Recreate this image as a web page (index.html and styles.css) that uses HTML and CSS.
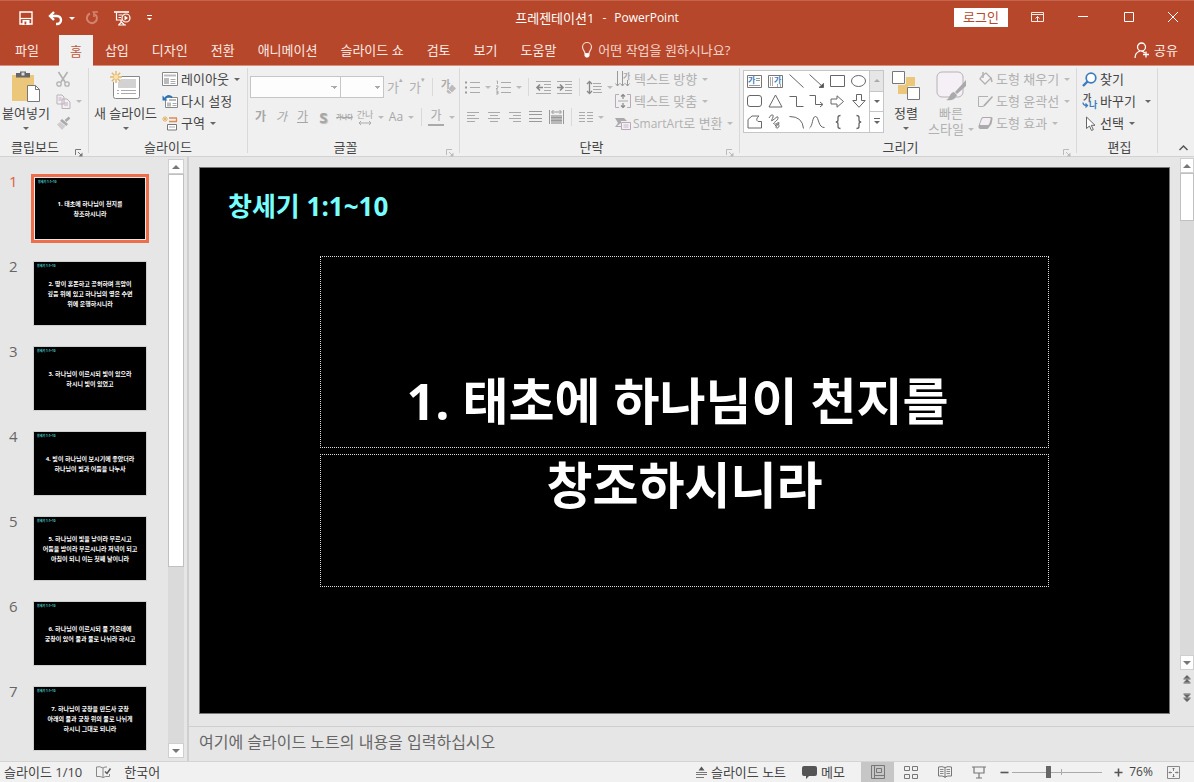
FILE: index.html
```html
<!DOCTYPE html>
<html lang="ko">
<head>
<meta charset="utf-8">
<title>프레젠테이션1 - PowerPoint</title>
<link rel="stylesheet" href="styles.css">
</head>
<body>
<div class="app">
<header class="titlebar">
  <div class="quick">
    <button class="qb" aria-label="저장"><svg width="14" height="14" viewBox="0 0 14 14"><path d="M1 1h12v12H1z" fill="none" stroke="#fff" stroke-width="1.4"/><path d="M1 7.5h12" stroke="#fff" stroke-width="1.2"/><path d="M3.5 9h7v5h-7z" fill="#fff"/><path d="M5.5 10.500h1.800v3h-1.800z" fill="#b7472a"/></svg></button>
    <button class="qb undo" aria-label="실행 취소"><svg width="15" height="14" viewBox="0 0 15 14"><path d="M2 5h7a4 4 0 0 1 0 8H8" fill="none" stroke="#fff" stroke-width="2.400"/><path d="M6 1 2 5l4 4" fill="none" stroke="#fff" stroke-width="2.400"/></svg><i class="caret"></i></button>
    <button class="qb" aria-label="다시 실행" disabled><svg width="14" height="14" viewBox="0 0 14 14"><path d="M5 2.500a5 5 0 1 0 5 .7" fill="none" stroke="#d18570" stroke-width="2"/><path d="M7.500 1H13M9 1v5" fill="none" stroke="#d18570" stroke-width="1.600"/></svg></button>
    <button class="qb" aria-label="처음부터 슬라이드 쇼"><svg width="17" height="15" viewBox="0 0 17 15"><path d="M0 1h15" stroke="#fff" stroke-width="1.600"/><path d="M2.500 1.500V9H8M4.500 4h4M4.500 6.500h2.500M7 9v3M4 14h8M5 13.500 7.500 11l3 3" fill="none" stroke="#fff" stroke-width="1.200"/><circle cx="12" cy="7" r="4" fill="none" stroke="#fff" stroke-width="1.200"/><path d="M10.500 4.500 14 7l-3.500 2.500z" fill="#fff"/></svg></button>
    <button class="qb more" aria-label="빠른 실행 도구 모음 사용자 지정"><svg width="6" height="6" viewBox="0 0 6 6"><path d="M0 .5h5" stroke="#fff"/><path d="M0 3h5L2.500 5.500z" fill="#fff"/></svg></button>
  </div>
  <div class="doc-title"><span>프레젠테이션1</span><span class="latin">-</span><span class="latin">PowerPoint</span></div>
  <div class="window">
    <button class="login">로그인</button>
    <button class="wb" aria-label="리본 메뉴 표시 옵션"><svg width="13" height="10" viewBox="0 0 13 10"><path d="M.5.5h12v9H.5zM.5 2.500h12M6.500 9V4.500M4.500 6.500l2-2 2 2" fill="none" stroke="#fbe9e4"/></svg></button>
    <button class="wb" aria-label="최소화"><svg width="10" height="10" viewBox="0 0 10 10"><path d="M0 4.500h10" stroke="#fff"/></svg></button>
    <button class="wb" aria-label="최대화"><svg width="10" height="10" viewBox="0 0 10 10"><path d="M.5.5h9v9h-9z" fill="none" stroke="#fff"/></svg></button>
    <button class="wb close" aria-label="닫기"><svg width="10" height="10" viewBox="0 0 10 10"><path d="M0 0l10 10M10 0 0 10" stroke="#fff"/></svg></button>
  </div>
</header>
<nav class="tabs">
  <button class="tab file">파일</button><button class="tab on">홈</button><button class="tab">삽입</button><button class="tab">디자인</button><button class="tab">전환</button><button class="tab">애니메이션</button><button class="tab">슬라이드 쇼</button><button class="tab">검토</button><button class="tab">보기</button><button class="tab">도움말</button>
  <button class="tell"><svg width="12" height="16" viewBox="0 0 12 16"><path d="M4 11.500C4 9 1.500 8 1.500 5a4.500 4.500 0 0 1 9 0c0 3-2.500 4-2.500 6.500z" fill="none" stroke="#f6d9d1" stroke-width="1.200"/><path d="M3.500 11.500h5V14L7 15.500H5L3.500 14z" fill="#fff"/></svg>어떤 작업을 원하시나요?</button>
  <button class="share"><svg width="16" height="17" viewBox="0 0 16 17"><circle cx="7.500" cy="5" r="4" fill="none" stroke="#fff" stroke-width="1.300"/><path d="M1 16c0-3.500 2-6 5-7M8 9l3 2M12 9.500v6M9 12.500h6" fill="none" stroke="#fff" stroke-width="1.300"/></svg>공유</button>
</nav>
<section class="ribbon">
  <div class="group g-clip">
    <div class="body">
      <button class="big"><svg width="30" height="34" viewBox="0 0 30 34"><path d="M1 4h22v26H1z" fill="#edc779"/><path d="M5 2h4V.5h6V2h4v4.500H5z" fill="#666"/><path d="M10.500 1.500h3v3h-3z" fill="#ddd"/><path d="M16.500 14.500h8l4 4v12h-12z" fill="#fff" stroke="#777"/><path d="M24.500 14.500v4h4" fill="none" stroke="#777"/></svg><span>붙여넣기</span><i class="caret"></i></button>
      <div class="col">
        <button class="row" disabled aria-label="잘라내기"><svg width="14" height="15" viewBox="0 0 14 15"><path d="M2.500 0 9 10M11.500 0 5 10" stroke="#b1b1b1" stroke-width="1.600"/><circle cx="3" cy="12" r="2.200" fill="none" stroke="#b1b1b1" stroke-width="1.300"/><circle cx="11" cy="12" r="2.200" fill="none" stroke="#b1b1b1" stroke-width="1.300"/></svg></button>
        <button class="row" disabled aria-label="복사"><svg width="15" height="15" viewBox="0 0 15 15"><path d="M1 1h5l2 2v7H1zM6 5h5l3 3v6.500H6z" fill="#f3eef3" stroke="#b9b1b9"/><path d="M2.500 4h3M2.500 6h3M8 9h4M8 11h4" stroke="#b9b1b9"/></svg><i class="caret"></i></button>
        <button class="row" disabled aria-label="서식 복사"><svg width="15" height="13" viewBox="0 0 15 13"><path d="M13.500.5 9.500 4" stroke="#aaa" stroke-width="2.500"/><path d="M6 2l6 5-1.500 2L4 4z" fill="#aaa"/><path d="M4 5l5.500 4L6 13 1 7.500z" fill="#d0ccd0"/></svg></button>
      </div>
    </div>
    <div class="label launch"><span>클립보드</span><button class="launcher" aria-label="클립보드 옵션"><svg width="8" height="8" viewBox="0 0 8 8"><path d="M.5 6V.5H6M3 3l3.500 3.500" fill="none" stroke="#777"/><path d="M7.500 3.500v4h-4z" fill="#777"/></svg></button></div>
  </div>
  <div class="group g-slides">
    <div class="body">
      <button class="big new"><svg width="32" height="34" viewBox="0 0 32 34"><path d="M3.500 5.500h26v20q0 2-2 2h-22q-2 0-2-2z" fill="#fff" stroke="#888"/><path d="M8 8h18v9H8z" fill="#d2d2d2"/><path d="M7 19.500h2M11 19.500h15M7 22.500h2M11 22.500h15" stroke="#aaa"/><circle cx="6" cy="6" r="5.500" fill="#f0f0f0"/><path d="M6 0v12M0 6h12M1.800 1.800l8.400 8.400M10.200 1.800l-8.400 8.400" stroke="#e3b667" stroke-width="1.400"/><circle cx="6" cy="6" r="2.200" fill="#f8e0a8"/></svg><span>새 슬라이드</span><i class="caret"></i></button>
      <div class="col">
        <button class="row"><svg width="16" height="14" viewBox="0 0 16 14"><path d="M.5.5h15v13H.5z" fill="#fff" stroke="#888"/><path d="M2 2.500h12v2H2zM2 6h5v6H2z" fill="#bbb"/><path d="M8.500 7.500h5M8.500 9.500h5M8.500 11.500h5" stroke="#aaa"/></svg>레이아웃<i class="caret"></i></button>
        <button class="row"><svg width="16" height="14" viewBox="0 0 16 14"><path d="M3.500 3.500h12v10h-12z" fill="#fff" stroke="#888"/><path d="M7 5h7v2H7zM5 8.500h4v4H5z" fill="#bbb"/><path d="M10.500 9.500h4M10.500 11.500h4" stroke="#aaa"/><path d="M3 5.500C4 2 7 1 10 3.500" fill="none" stroke="#2e75b6" stroke-width="2"/><path d="M.5 1.500v5h5z" fill="#2e75b6"/></svg>다시 설정</button>
        <button class="row"><svg width="16" height="15" viewBox="0 0 16 15"><path d="M7 2h8M14.500 2v4M7 5.500h8" fill="none" stroke="#dc8a55" stroke-width="1.300"/><path d="M5.500 8.500h9v5.500h-9z" fill="#fff" stroke="#777"/><path d="M7 11h6" stroke="#aaa"/><path d="M3 0v6M0 3h6M1 1l4 4M5 1 1 5" stroke="#e3b667"/></svg>구역<i class="caret"></i></button>
      </div>
    </div>
    <div class="label"><span>슬라이드</span></div>
  </div>
  <div class="group g-font off">
    <div class="body rows">
      <div class="line"><select class="combo name" aria-label="글꼴" disabled><option></option></select><select class="combo size" aria-label="글꼴 크기" disabled><option></option></select>
        <button class="tb grow">가<sup>▴</sup></button><button class="tb grow">가<sup>▾</sup></button><i class="sep"></i><button class="tb erase" aria-label="서식 지우기"><svg width="15" height="16" viewBox="0 0 15 16"><text x="0" y="9" class="svg-ko" font-size="10">가</text><path d="M11 5.500l4 4-5 5H7L5.500 12z" fill="#bdb9bd"/><path d="M7 10l4 4" stroke="#f0f0f0"/></svg></button></div>
      <div class="line chars"><button class="tb"><b>가</b></button><button class="tb"><em>가</em></button><button class="tb"><u>가</u></button><button class="tb shadow">S</button><button class="tb strike"><s>가나다</s></button><button class="tb drop"><span class="spacing">간나<svg width="14" height="4" viewBox="0 0 14 4"><path d="M1 2h12M3 0 1 2l2 2M11 0l2 2-2 2" fill="none" stroke="#aaa"/></svg></span><i class="caret"></i></button><button class="tb drop">Aa<i class="caret"></i></button><i class="sep"></i><button class="tb drop"><span class="colour">가</span><i class="caret"></i></button></div>
    </div>
    <div class="label launch"><span>글꼴</span><button class="launcher" aria-label="글꼴 옵션"><svg width="8" height="8" viewBox="0 0 8 8"><path d="M.5 6V.5H6M3 3l3.500 3.500" fill="none" stroke="#bbb"/><path d="M7.500 3.500v4h-4z" fill="#bbb"/></svg></button></div>
  </div>
  <div class="group g-para off">
    <div class="body">
      <div class="rows">
        <div class="line"><button class="tb drop" aria-label="글머리 기호"><svg width="15" height="14" viewBox="0 0 15 14"><path d="M5 2.500h10M5 7.500h10M5 12.500h10" stroke="#aaa"/><path d="M0 1.500h2v2H0zM0 6.500h2v2H0zM0 11.500h2v2H0z" fill="#999"/></svg><i class="caret"></i></button><button class="tb drop" aria-label="번호 매기기"><svg width="15" height="15" viewBox="0 0 15 15"><path d="M5 2.500h10M5 7.500h10M5 12.500h10" stroke="#aaa"/><path d="M.5 1h1v3M0 6h2v1.500L0 9h2M0 11h2v3H0M.5 12.500H2" fill="none" stroke="#999" stroke-width=".8"/></svg><i class="caret"></i></button><i class="sep"></i><button class="tb" aria-label="내어쓰기"><svg width="15" height="14" viewBox="0 0 15 14"><path d="M0 1.500h15M8 4.500h7M8 7.500h7M8 10.500h7M0 13.500h15" stroke="#aaa"/><path d="M7 7.500H1.500M4 4.500 1 7.500l3 3" fill="none" stroke="#888" stroke-width="1.600"/></svg></button><button class="tb" aria-label="들여쓰기"><svg width="15" height="14" viewBox="0 0 15 14"><path d="M0 1.500h15M8 4.500h7M8 7.500h7M8 10.500h7M0 13.500h15" stroke="#aaa"/><path d="M0 7.500h5.500M3 4.500l3 3-3 3" fill="none" stroke="#888" stroke-width="1.600"/></svg></button><i class="sep"></i><button class="tb drop" aria-label="줄 간격"><svg width="15" height="15" viewBox="0 0 15 15"><path d="M6 3.500h8M6 6.500h9M6 9.500h8M6 12.500h9" stroke="#aaa"/><path d="M2.500 1.500v12M0 4l2.500-2.500L5 4M0 11l2.500 2.500L5 11" fill="none" stroke="#888" stroke-width="1.300"/></svg><i class="caret"></i></button></div>
        <div class="line"><button class="tb" aria-label="왼쪽 맞춤"><svg width="12" height="12" viewBox="0 0 12 12"><path d="M0 1.500h12M0 4.500h8M0 7.500h12M0 10.500h8" stroke="#aaa"/></svg></button><button class="tb" aria-label="가운데 맞춤"><svg width="12" height="12" viewBox="0 0 12 12"><path d="M0 1.500h12M2 4.500h8M0 7.500h12M2 10.500h8" stroke="#aaa"/></svg></button><button class="tb" aria-label="오른쪽 맞춤"><svg width="12" height="12" viewBox="0 0 12 12"><path d="M0 1.500h12M4 4.500h8M0 7.500h12M4 10.500h8" stroke="#aaa"/></svg></button><button class="tb" aria-label="양쪽 맞춤"><svg width="13" height="12" viewBox="0 0 13 12"><path d="M0 .5h13M0 3.500h13M0 7.500h13M0 10.500h13" stroke="#999"/></svg></button><button class="tb" aria-label="균등 분할"><svg width="15" height="16" viewBox="0 0 15 16"><path d="M.5 1v14M14.500 1v14M3 3h9M4.500 1 2.500 3l2 2M10.500 1l2 2-2 2" fill="none" stroke="#999"/><path d="M2 6h11v9H2z" fill="#b8b8b8"/><path d="M2 8.500h11M2 11.500h11" stroke="#999"/></svg></button><i class="sep"></i><button class="tb drop" aria-label="단"><svg width="14" height="12" viewBox="0 0 14 12"><path d="M0 1.500h6M8 1.500h6M0 4.500h6M8 4.500h6M0 7.500h6M8 7.500h6M0 10.500h6M8 10.500h6" stroke="#aaa"/></svg><i class="caret"></i></button></div>
      </div>
      <div class="col">
        <button class="row"><svg width="16" height="17" viewBox="0 0 16 17"><path d="M2.500 0v15M7.500 0v15M12.500 9v6M.5 12.500l2 2.500 2-2.500M5.500 12.500l2 2.500 2-2.500M10.500 12.500l2 2.500 2-2.500" fill="none" stroke="#999"/><text x="8" y="8" class="svg-ko" font-size="8">가</text></svg>텍스트 방향<i class="caret"></i></button>
        <button class="row"><svg width="16" height="15" viewBox="0 0 16 15"><path d="M4 .5H.5v13H4M12 .5h3.500v13H12" fill="none" stroke="#b9a9b9"/><path d="M3 7h10" stroke="#aaa"/><path d="M8 0v5M6 2.500 8 .5l2 2M8 9v5M6 11.500l2 2 2-2" fill="none" stroke="#888" stroke-width="1.200"/></svg>텍스트 맞춤<i class="caret"></i></button>
        <button class="row smart"><svg width="16" height="13" viewBox="0 0 16 13"><path d="M0 1h9l3 3H6v2L2 9h4v1H0l3-4z" fill="#aaa"/><path d="M6.500 5.500h9v7h-9z" fill="#f6f0f6" stroke="#b9a9b9"/><path d="M8.500 8h5M8.500 10h5" stroke="#c4bac4"/></svg><span><span class="latin">SmartArt</span>로 변환</span><i class="caret"></i></button>
      </div>
    </div>
    <div class="label launch"><span>단락</span><button class="launcher" aria-label="단락 옵션"><svg width="8" height="8" viewBox="0 0 8 8"><path d="M.5 6V.5H6M3 3l3.500 3.500" fill="none" stroke="#bbb"/><path d="M7.500 3.500v4h-4z" fill="#bbb"/></svg></button></div>
  </div>
  <div class="group g-draw">
    <div class="body">
      <div class="gallery">
        <div class="shapes">
          <button aria-label="텍스트 상자"><svg width="15" height="13" viewBox="0 0 15 13"><path d="M.5.5h14v12H.5z" fill="#fff" stroke="#777"/><text x="1" y="8" font-size="8" class="svg-ko blue">가</text><path d="M9 3.500h4M9 5.500h4M2 10.500h11" stroke="#999"/></svg></button>
          <button aria-label="세로 텍스트 상자"><svg width="15" height="13" viewBox="0 0 15 13"><path d="M.5.5h14v12H.5z" fill="#fff" stroke="#777"/><text x="6" y="8" font-size="8" class="svg-ko blue">가</text><path d="M2.500 2v9M4.500 2v9M9.500 9v3M12.500 9v3" stroke="#aaa"/></svg></button>
          <button aria-label="선"><svg width="15" height="14" viewBox="0 0 15 14"><path d="M.5.5l14 13"/></svg></button>
          <button aria-label="화살표"><svg width="15" height="14" viewBox="0 0 15 14"><path d="M.5.5l13 12"/><path d="M14.500 9.500v4H10z" fill="#555"/></svg></button>
          <button aria-label="직사각형"><svg width="15" height="12" viewBox="0 0 15 12"><path d="M.5.5h14v11H.5z"/></svg></button>
          <button aria-label="타원"><svg width="15" height="12" viewBox="0 0 15 12"><ellipse cx="7.500" cy="6" rx="7" ry="5.500"/></svg></button>
          <button aria-label="둥근 직사각형"><svg width="15" height="12" viewBox="0 0 15 12"><rect x=".5" y=".5" width="14" height="11" rx="2.500"/></svg></button>
          <button aria-label="삼각형"><svg width="15" height="14" viewBox="0 0 15 14"><path d="M7.500 1 14 13H1z"/></svg></button>
          <button aria-label="꺾인 연결선"><svg width="15" height="13" viewBox="0 0 15 13"><path d="M.5 1.500h7v10h7"/></svg></button>
          <button aria-label="꺾인 화살표"><svg width="15" height="14" viewBox="0 0 15 14"><path d="M.5 1.500h6v9h7M11 8l3 2.500-3 2.500"/></svg></button>
          <button aria-label="오른쪽 화살표"><svg width="15" height="13" viewBox="0 0 15 13"><path d="M1 4h6V.8l6.500 5.700L7 12.200V9H1z"/></svg></button>
          <button aria-label="아래쪽 화살표"><svg width="14" height="14" viewBox="0 0 14 14"><path d="M4.500.5h5v6h3.700L7 13.300.8 6.500h3.700z"/></svg></button>
          <button aria-label="자유형 도형"><svg width="15" height="14" viewBox="0 0 15 14"><path d="M1 13V4.500L5 1h7q-4 3.500-1 5.500h3.500V13z"/></svg></button>
          <button aria-label="자유형 선"><svg width="14" height="15" viewBox="0 0 14 15"><path d="M1 4c2-4 5-4 4-1S2 8 5 6s5-5 5-2-6 5-4 6 5-3 5-1-3 2-3 4 3 1 3-1-1-3-4 0"/></svg></button>
          <button aria-label="호"><svg width="15" height="14" viewBox="0 0 15 14"><path d="M.5 1.500q13 0 14 12"/></svg></button>
          <button aria-label="곡선"><svg width="16" height="14" viewBox="0 0 16 14"><path d="M.5 13C4 11 3 1.500 6.500 1.500S9 13 15.500 12.500"/></svg></button>
          <button aria-label="왼쪽 중괄호"><svg width="6" height="14" viewBox="0 0 6 14"><path d="M5.500.5Q3 .5 3 2.500V5Q3 7 .8 7 3 7 3 9v2.500q0 2 2.500 2" stroke-width="1.300"/></svg></button>
          <button aria-label="오른쪽 중괄호"><svg width="6" height="14" viewBox="0 0 6 14"><path d="M.5.500Q3 .5 3 2.500V5q0 2 2.200 2Q3 7 3 9v2.500q0 2-2.500 2" stroke-width="1.300"/></svg></button>
        </div>
        <div class="scroll3"><button disabled aria-label="위로"><i class="caret up"></i></button><button aria-label="아래로"><i class="caret"></i></button><button aria-label="자세히"><i class="caret bar-top"></i></button></div>
      </div>
      <button class="big arrange"><svg width="28" height="34" viewBox="0 0 28 34"><path d="M14 6h9v9h-9zM6 14h9v9H6z" fill="#edc779"/><path d="M13 13h3v3h-3z" fill="#edc779"/><path d="M.5.500h12v12H.5zM15.500 16.500h12v12h-12z" fill="#fff" stroke="#777"/></svg><span>정렬</span><i class="caret"></i></button>
      <button class="big style" disabled><svg width="31" height="34" viewBox="0 0 31 34"><rect x="1" y="1" width="26" height="25" rx="5" fill="#f5f0f6" stroke="#b8b0b8"/><path d="M30 9v6l-9 8-2-2z" fill="#aaa"/><path d="M18 21l3 3c-2 5-7 6-11 5 4-1 3-7 8-8z" fill="#aaa"/></svg><span>빠른</span><span class="last">스타일<i class="caret"></i></span></button>
      <div class="col off">
        <button class="row" disabled><svg width="15" height="14" viewBox="0 0 15 14"><path d="M4 4l4-3 5 5-6 6-5-5z" fill="#f6f2f6" stroke="#b1b1b1" stroke-width="1.300"/><path d="M5 0v6M13 6l1 4" stroke="#b1b1b1" stroke-width="1.500"/></svg>도형 채우기<i class="caret"></i></button>
        <button class="row" disabled><svg width="15" height="13" viewBox="0 0 15 13"><path d="M10 1.500H.5v10H5" fill="none" stroke="#b1b1b1"/><path d="M14 1 6 9.500l-1.500 2.500L7 11l8-9z" fill="#aaa"/></svg>도형 윤곽선<i class="caret"></i></button>
        <button class="row" disabled><svg width="15" height="14" viewBox="0 0 15 14"><path d="M5 1h8q2 0 1.500 2l-1 5-3 4q-.5 1-1.500 1H2.500Q0 12.500.5 10L3 3q.5-2 2-2z" fill="#aaa"/><path d="M5.500 2H12q1 0 .7 1l-1.500 5q-.4 1-1.400 1H3q-1.300 0-1-1l2-5q.5-1 1.500-1z" fill="#f4eef4"/></svg>도형 효과<i class="caret"></i></button>
      </div>
    </div>
    <div class="label launch"><span>그리기</span><button class="launcher" aria-label="그리기 옵션"><svg width="8" height="8" viewBox="0 0 8 8"><path d="M.5 6V.5H6M3 3l3.500 3.500" fill="none" stroke="#bbb"/><path d="M7.500 3.500v4h-4z" fill="#bbb"/></svg></button></div>
  </div>
  <div class="group g-edit">
    <div class="body">
      <div class="col">
        <button class="row"><svg width="15" height="15" viewBox="0 0 15 15"><circle cx="9" cy="6" r="4.800" fill="#fff" stroke="#3a7cbf" stroke-width="1.700"/><path d="M5.500 9.500 1 14" stroke="#3a7cbf" stroke-width="2.400"/></svg>찾기</button>
        <button class="row"><svg width="15" height="16" viewBox="0 0 15 16"><text x="1" y="8" font-size="9" class="svg-ko dark">가</text><text x="7" y="15" font-size="9" class="svg-ko blue">나</text><path d="M1 9.500q0 3 4 3M3.500 10.500l2 2-2 2" fill="none" stroke="#3a7cbf" stroke-width="1.300"/></svg>바꾸기<i class="caret wide"></i></button>
        <button class="row"><svg width="15" height="15" viewBox="0 0 15 15"><path d="M4.500 1v11.500l3-2.500 2 4.500 1.800-.8-2-4.400H13z" fill="#fff" stroke="#666"/></svg>선택<i class="caret"></i></button>
      </div>
    </div>
    <div class="label"><span>편집</span></div>
  </div>
  <button class="collapse" aria-label="리본 메뉴 축소"><svg width="9" height="6" viewBox="0 0 9 6"><path d="M.5 5l4-4 4 4" fill="none" stroke="#555" stroke-width="1.500"/></svg></button>
</section>
<main class="work">
  <ol class="thumbs">
    <li class="on"><span>1</span><div class="thumb"><h6>창세기 1:1~10</h6><p>1. 태초에 하나님이 천지를<br>창조하시니라</p></div></li>
    <li><span>2</span><div class="thumb"><h6>창세기 1:1~10</h6><p>2. 땅이 혼돈하고 공허하며 흑암이<br>깊음 위에 있고 하나님의 영은 수면<br>위에 운행하시니라</p></div></li>
    <li><span>3</span><div class="thumb"><h6>창세기 1:1~10</h6><p>3. 하나님이 이르시되 빛이 있으라<br>하시니 빛이 있었고</p></div></li>
    <li><span>4</span><div class="thumb"><h6>창세기 1:1~10</h6><p>4. 빛이 하나님이 보시기에 좋았더라<br>하나님이 빛과 어둠을 나누사</p></div></li>
    <li><span>5</span><div class="thumb"><h6>창세기 1:1~10</h6><p>5. 하나님이 빛을 낮이라 부르시고<br>어둠을 밤이라 부르시니라 저녁이 되고<br>아침이 되니 이는 첫째 날이니라</p></div></li>
    <li><span>6</span><div class="thumb"><h6>창세기 1:1~10</h6><p>6. 하나님이 이르시되 물 가운데에<br>궁창이 있어 물과 물로 나뉘라 하시고</p></div></li>
    <li><span>7</span><div class="thumb"><h6>창세기 1:1~10</h6><p>7. 하나님이 궁창을 만드사 궁창<br>아래의 물과 궁창 위의 물로 나뉘게<br>하시니 그대로 되니라</p></div></li>
  </ol>
  <div class="bar left"><button aria-label="위로"><i class="caret up"></i></button><div class="track"><div class="grip long"></div></div><button aria-label="아래로"><i class="caret"></i></button></div>
  <section class="editor">
    <div class="canvas">
      <article class="slide">
        <h1>창세기 1:1~10</h1>
        <div class="ph first">1. 태초에 하나님이 천지를</div>
        <div class="ph second">창조하시니라</div>
      </article>
      <div class="bar right"><button aria-label="위로"><i class="caret up"></i></button><div class="track"><div class="grip"></div></div><button aria-label="아래로"><i class="caret"></i></button>
        <button class="page" aria-label="이전 슬라이드"><svg width="8" height="9" viewBox="0 0 8 9"><path d="M4 0l3.500 3.500h-7zM4 4l3.500 3.500h-7z" fill="#666"/><path d="M.5 4h7M.5 8h7" stroke="#666"/></svg></button><button class="page" aria-label="다음 슬라이드"><svg width="8" height="9" viewBox="0 0 8 9"><path d="M.5 1.500h7L4 5zM.5 5.500h7L4 9z" fill="#666"/><path d="M.5 1h7M.5 5h7" stroke="#666"/></svg></button></div>
    </div>
    <div class="notes">여기에 슬라이드 노트의 내용을 입력하십시오</div>
  </section>
</main>
<footer class="status">
  <span>슬라이드 1/10</span>
  <button class="spell" aria-label="맞춤법 검사"><svg width="15" height="12" viewBox="0 0 15 12"><path d="M7 2Q4 0 .5 1v9.500q4-.5 6.500 1 2-1.500 6.500-1V8M7 2v9.500M7 2q2-1.500 4-1" fill="none" stroke="#888"/><path d="M9 5.500l2 2 3.500-5" fill="none" stroke="#555" stroke-width="1.400"/></svg></button>
  <button>한국어</button>
  <div class="views">
    <button class="st"><svg width="11" height="12" viewBox="0 0 11 12"><path d="M2.500 4.500h6L5.500.5z" fill="#555"/><path d="M0 6.500h11M0 8.500h11M0 11.500h8" stroke="#777"/></svg>슬라이드 노트</button>
    <button class="st"><svg width="15" height="13" viewBox="0 0 15 13"><path d="M2 0h11q2 0 2 2v6q0 2-2 2H7l-3 3v-3H2q-2 0-2-2V2q0-2 2-2z" fill="#555"/></svg>메모</button>
    <button class="view on" aria-label="기본"><svg width="14" height="14" viewBox="0 0 14 14"><path d="M.5.500h13v13H.5zM3.500.5v13M3.500 10.500h10M5.500 3.500h5v4h-5z" fill="none" stroke="#777"/></svg></button>
    <button class="view" aria-label="여러 슬라이드"><svg width="14" height="13" viewBox="0 0 14 13"><path d="M.5.5h5v4h-5zM8.500.5h5v4h-5zM.5 8.500h5v4h-5zM8.500 8.500h5v4h-5z" fill="none" stroke="#777"/></svg></button>
    <button class="view" aria-label="읽기용 보기"><svg width="14" height="12" viewBox="0 0 14 12"><path d="M7 1.500Q4 0 .5 1v9q4-.5 6.500 1 2.500-1.500 6.500-1V1Q10 0 7 1.500zM7 1.500V12" fill="none" stroke="#777"/><path d="M2 3.500h3.500M2 5.500h3.500M2 7.500h3.500M8.500 3.500H12M8.500 5.500H12M8.500 7.500H12" stroke="#888"/></svg></button>
    <button class="view" aria-label="슬라이드 쇼"><svg width="14" height="13" viewBox="0 0 14 13"><path d="M0 1h14M2 1v6h10V1M7 7v5M4 12h6" fill="none" stroke="#777" stroke-width="1.200"/></svg></button>
    <button class="z" aria-label="축소"><svg width="9" height="9" viewBox="0 0 9 9"><path d="M.5 4.500h8" stroke="#555" stroke-width="1.600"/></svg></button>
    <input class="zoom" type="range" min="0" max="100" value="40" aria-label="확대/축소">
    <button class="z" aria-label="확대"><svg width="9" height="9" viewBox="0 0 9 9"><path d="M.5 4.500h8M4.500.5v8" stroke="#555" stroke-width="1.600"/></svg></button>
    <button class="pct latin">76%</button>
    <button class="fit" aria-label="창에 맞춤"><svg width="13" height="13" viewBox="0 0 13 13"><path d="M.5.5h12v12H.5z" fill="none" stroke="#888"/><path d="M6.500 2v3M6.500 8v3M2 6.500h3M8 6.500h3M5.500 3l1-1 1 1M5.500 10l1 1 1-1M3 5.500l-1 1 1 1M10 5.500l1 1-1 1" fill="none" stroke="#666" stroke-width=".8"/></svg></button>
  </div>
</footer>
</div>
</body>
</html>
```
FILE: styles.css
```css
* { box-sizing: border-box; }
body { margin: 0; font: 13px/16px "Open Sans", "Noto Sans CJK KR", sans-serif; color: #444; }
button { font: inherit; color: inherit; background: none; border: 0; padding: 0; margin: 0; display: flex; align-items: center; justify-content: center; white-space: nowrap; }
svg { display: block; flex: none; overflow: visible; }
.app { display: flex; flex-direction: column; min-height: 100vh; background: #e6e6e6; }
.latin { font-size: 12px; }
.caret { flex: none; width: 0; height: 0; border: 3px solid transparent; border-top-color: #666; border-bottom: 0; }
.caret.up { border-top: 0; border-bottom: 3px solid #aaa; }

/* Title bar */
.titlebar { display: grid; grid-template-columns: 1fr auto 1fr; align-items: center; height: 35px; background: #b7472a; border-top: 1px solid #c7654c; color: #fff; }
.quick { display: flex; align-items: center; padding-left: 19px; gap: 15px; }
.qb.undo { gap: 6px; margin-right: -5px; }
.qb .caret { border-top-color: #fff; }
.qb.more { margin-left: 1px; }
.doc-title { display: flex; gap: 8px; }
.window { display: flex; justify-content: flex-end; align-items: center; padding-bottom: 2px; }
.login { background: #fff; color: #b7472a; width: 54px; height: 19px; margin-right: 6px; }
.wb { width: 46px; height: 24px; }
.wb.close { width: 42px; }

/* Tabs */
.tabs { display: flex; gap: 1px; height: 31px; background: #b7472a; color: #fbeae5; border-bottom: 1px solid #d68f7d; }
.tab { padding: 0 11px; }
.tab.file { padding: 0 19px 0 15px; }
.tab.on { background: #f0f0f0; color: #c0583c; height: 31px; }
.tell { margin-left: 13px; gap: 5px; color: #f3d4cb; }
.share { margin-left: auto; padding-right: 16px; gap: 4px; }

/* Ribbon */
.ribbon { display: flex; height: 91px; background: #f0f0f0; border-bottom: 1px solid #d2d2d2; }
.group { display: flex; flex-direction: column; margin: 2px 0 3px; border-right: 1px solid #d9d9d9; flex: none; }
.body { display: flex; height: 69px; }
.label { display: grid; grid-template-columns: 1fr; height: 16px; line-height: 20px; text-align: center; color: #444; }
.label.launch { grid-template-columns: 1fr 18px; }
.launcher { align-items: flex-end; }
.g-clip { width: 89px; }
.g-slides { width: 159px; }
.g-font { width: 212px; padding-left: 2px; }
.g-para { width: 280px; padding-left: 2px; }
.g-draw { width: 337px; padding-left: 3px; }
.g-edit { width: 81px; padding-left: 5px; }
.off, :disabled { color: #b1b1b1; }
.off .caret, :disabled .caret { border-top-color: #bbb; }
.big { flex-direction: column; justify-content: flex-start; padding-top: 3px; width: 52px; }
.big .caret { margin-top: 6px; }
.big .last { display: flex; align-items: center; gap: 4px; }
.big .last .caret { margin: 0; }
.big.new { width: 73px; }
.big.arrange { width: 44px; }
.big.style { width: 46px; margin-right: 4px; }
.col { display: flex; flex-direction: column; }
.row { height: 22px; gap: 3px; justify-content: flex-start; }
.row .caret { margin-left: 2px; }
.row .caret.wide { margin-left: 6px; }
.row.smart { gap: 2px; }
.g-clip .col { padding-left: 4px; }
.rows { display: flex; flex-direction: column; gap: 8px; padding-top: 8px; }
.line { display: flex; align-items: center; height: 22px; }
.combo { appearance: none; opacity: 1; height: 22px; border: 1px solid #c6c6c6; border-radius: 0; background: #fdfdfd conic-gradient(from 315deg at 50% 100%, #aaa 90deg, transparent 0) no-repeat right 3px center / 6px 3px; }
.combo.name { width: 91px; }
.combo.size { width: 43px; border-left: 0; }
.tb { width: 21px; height: 22px; }
.tb.grow { width: 22px; }
.tb.erase { width: 22px; }
.tb sup { font-size: 7px; line-height: 8px; align-self: flex-start; }
.tb.drop { width: 31px; gap: 5px; }
.chars { font-size: 12px; color: #a6a6a6; }
.tb.shadow { font-size: 15px; font-weight: bold; text-shadow: 1px 1px 1px #bbb; }
.tb.strike { font-size: 6px; font-weight: bold; }
.spacing { display: flex; flex-direction: column; align-items: center; font-size: 9px; line-height: 12px; }
.colour { border-bottom: 2px solid #aaa; padding: 0 2px; }
.sep { width: 1px; height: 18px; background: #d9d9d9; margin: 0 4px; }
.svg-ko { font-family: "Noto Sans CJK KR", sans-serif; font-weight: bold; fill: #aaa; stroke: none; }
.svg-ko.blue { fill: #3a7cbf; }
.svg-ko.dark { fill: #555; }
.gallery { display: flex; width: 141px; height: 63px; margin-top: 2px; background: #fff; border: 1px solid #c6c6c6; }
.shapes { display: grid; grid-template-columns: repeat(6, 1fr); flex: 1; }
.shapes svg { fill: none; stroke: #666; }
.scroll3 { display: grid; width: 14px; border-left: 1px solid #c6c6c6; }
.scroll3 button + button { border-top: 1px solid #c6c6c6; }
.scroll3 :disabled { background: #e6e6e6; }
.caret.bar-top { position: relative; }
.caret.bar-top::before { content: ""; position: absolute; left: -3px; top: -6px; width: 6px; height: 1px; background: #666; }
.collapse { margin-left: auto; align-self: flex-end; padding: 0 6px 5px; }

/* Work area */
.work { display: grid; grid-template-columns: 168px 16px 1fr; flex: 1; }
.thumbs { list-style: none; margin: 0; padding: 17px 0 0; display: grid; gap: 16px; align-content: start; }
.thumbs li { display: flex; height: 69px; font-size: 15px; color: #666; }
.thumbs li > span { width: 31px; padding-left: 9px; line-height: 14px; }
.thumbs li.on > span { color: #e0603f; }
.thumb { width: 118px; height: 69px; border: 2px solid transparent; padding: 1px; background: linear-gradient(#000, #000) content-box; outline: 1px solid #cfcfcf; outline-offset: -3px; color: #fff; display: grid; grid-template-rows: 8px 1fr 8px; }
.on .thumb { border: 3px solid #ee6e4c; padding: 1px; outline: 0; background: linear-gradient(#000, #000) content-box, #e6e6e6; }
.thumb h6 { margin: 0; font-size: 3px; line-height: 8px; color: #4fd6d6; padding-left: 3px; }
.thumb p { margin: 0; align-self: center; text-align: center; font-size: 6px; line-height: 10px; font-weight: bold; white-space: nowrap; }
.bar { display: flex; flex-direction: column; padding: 2px 0 3px; }
.bar > button { height: 15px; background: #fff; border: 1px solid #cfcfcf; }
.bar .caret { border-width: 4px; border-top-color: #777; border-bottom-width: 0; }
.bar .caret.up { border-top-width: 0; border-bottom: 4px solid #777; }
.track { flex: 1; background: #dadada; }
.grip { height: 48px; background: #fff; border: 1px solid #c0c0c0; }
.grip.long { height: 69%; }
.editor { display: flex; flex-direction: column; margin-left: 3px; border-left: 2px solid #cfcfcf; }
.canvas { display: flex; flex: 1; padding-left: 10px; }
.slide { flex: 1; align-self: flex-start; margin: 10px 10px 12px 0; aspect-ratio: 971 / 547; background: #000; border: 1px solid #777; color: #fff; font-weight: bold; }
.slide h1 { margin: 18px 0 30px 28px; font-size: 26px; line-height: 40px; color: #7ff; }
.ph { width: 75.3%; margin: 0 auto; border: 1px dotted #ddd; font-size: 50px; line-height: 80px; text-align: center; }
.first { height: 35.2%; display: flex; align-items: flex-end; justify-content: center; padding: 0 14px 6px 0; }
.second { height: 24.5%; margin-top: 6px; line-height: 60px; }
.bar.right { width: 14px; padding: 1px 0 20px; }
.bar.right > .page { background: none; border: 0; height: 18px; }
.notes { height: 35px; border-top: 1px solid #cfcfcf; padding: 7px 10px; font-size: 16px; color: #666; }

/* Status bar */
.status { display: flex; align-items: center; height: 21px; padding-left: 4px; background: #f1f1f1; border-top: 1px solid #d4d4d4; }
.spell { margin: 0 13px 0 14px; }
.views { display: flex; align-items: stretch; height: 20px; margin-left: auto; }
.st { gap: 4px; margin-right: 16px; }
.view { width: 34px; }
.view.on { background: #c6c6c6; width: 33px; }
.z { width: 16px; }
.zoom { appearance: none; width: 90px; margin: 0 8px 0 0; background: linear-gradient(#aaa, #aaa) no-repeat center / 100% 1px, linear-gradient(#aaa, #aaa) no-repeat 55% center / 1px 6px; }
.zoom::-webkit-slider-thumb { appearance: none; width: 5px; height: 12px; background: #666; }
.pct { width: 30px; }
.fit { padding: 0 14px 0 11px; }
```
